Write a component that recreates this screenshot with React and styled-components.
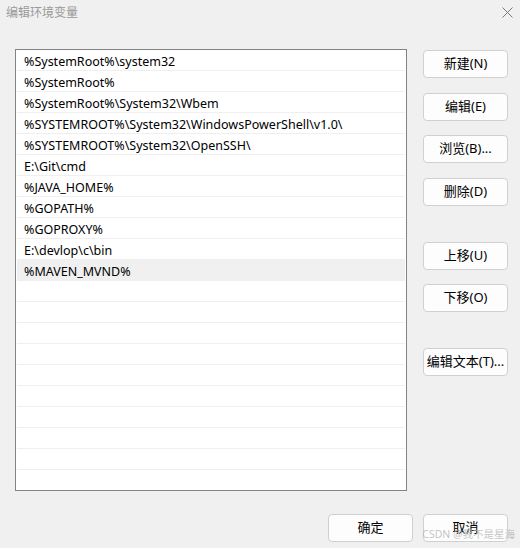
import React from 'react'
import styled, { createGlobalStyle } from 'styled-components'

const GlobalStyle = createGlobalStyle`
  html, body {
    margin: 0;
    padding: 0;
    background: #f0f0f0;
  }
  body {
    font-family: 'Segoe UI', 'Noto Sans', 'Noto Sans CJK SC', sans-serif;
  }
`

const paths = [
  '%SystemRoot%\\system32',
  '%SystemRoot%',
  '%SystemRoot%\\System32\\Wbem',
  '%SYSTEMROOT%\\System32\\WindowsPowerShell\\v1.0\\',
  '%SYSTEMROOT%\\System32\\OpenSSH\\',
  'E:\\Git\\cmd',
  '%JAVA_HOME%',
  '%GOPATH%',
  '%GOPROXY%',
  'E:\\devlop\\c\\bin',
  '%MAVEN_MVND%',
]

const ROWS = 21

const sideButtons = [
  { label: '新建(N)', space: 1 },
  { label: '编辑(E)', space: 15 },
  { label: '浏览(B)...', space: 14 },
  { label: '删除(D)', space: 15 },
  { label: '上移(U)', space: 36 },
  { label: '下移(O)', space: 14 },
  { label: '编辑文本(T)...', space: 36 },
]

export default function App() {
  const rows = Array.from({ length: ROWS }, (_, i) => paths[i] || '')
  return (
    <Window>
      <GlobalStyle />
      <TitleBar>
        <Title>编辑环境变量</Title>
        <CloseButton>
          <svg width="11" height="11" viewBox="0 0 11 11">
            <path d="M0.5 0.5 L10.5 10.5 M10.5 0.5 L0.5 10.5" stroke="#7a7a7a" strokeWidth="1" fill="none" />
          </svg>
        </CloseButton>
      </TitleBar>
      <Body>
        <ListBox>
          {rows.map((text, i) => (
            <Row key={i} $selected={i === 10} $last={i === ROWS - 1}>
              {text}
            </Row>
          ))}
        </ListBox>
        <Side>
          {sideButtons.map(b => (
            <Button key={b.label} $space={b.space}>{b.label}</Button>
          ))}
        </Side>
      </Body>
      <Footer>
        <Button>确定</Button>
        <Button>取消</Button>
        <Watermark>CSDN @我不是星海</Watermark>
      </Footer>
    </Window>
  )
}

const Window = styled.div`
  position: relative;
  width: 520px;
  height: 548px;
  background: #f0f0f0;
  overflow: hidden;
`

const TitleBar = styled.div`
  display: flex;
  align-items: center;
  justify-content: space-between;
  height: 24px;
  padding: 0 7px 0 6px;
`

const Title = styled.div`
  font-family: 'Noto Sans CJK SC', sans-serif;
  font-size: 12px;
  color: #999999;
  line-height: 1;
`

const CloseButton = styled.div`
  display: flex;
  align-items: center;
  justify-content: center;
  width: 11px;
  height: 11px;
`

const Body = styled.div`
  display: flex;
  align-items: flex-start;
  margin-top: 25px;
  padding-left: 15px;
`

const ListBox = styled.div`
  box-sizing: border-box;
  width: 392px;
  height: 442px;
  border: 1px solid #838383;
  background: #ffffff;
  padding: 0 1px;
  overflow: hidden;
`

const Row = styled.div`
  box-sizing: border-box;
  height: 21px;
  line-height: 23px;
  padding-left: 7px;
  font-size: 12.5px;
  color: #000000;
  white-space: nowrap;
  background: ${p => (p.$selected ? '#f0f0f0' : '#ffffff')};
  border-bottom: ${p => (p.$last ? 'none' : '1px solid #efefef')};
`

const Side = styled.div`
  display: flex;
  flex-direction: column;
  margin-left: 16px;
`

const Button = styled.button`
  box-sizing: border-box;
  width: 85px;
  height: 28px;
  margin-top: ${p => p.$space || 0}px;
  padding: 0 0 3px;
  border: 1px solid #d0d0d0;
  border-radius: 4px;
  background: #fdfdfd;
  color: #000000;
  font-family: 'Segoe UI', 'Noto Sans', 'Noto Sans CJK SC', sans-serif;
  font-size: 13px;
  white-space: nowrap;
`

const Footer = styled.div`
  display: flex;
  gap: 10px;
  justify-content: flex-end;
  margin-top: 23px;
  padding-right: 12px;
`

const Watermark = styled.div`
  position: absolute;
  right: 5px;
  bottom: 7px;
  font-family: 'Noto Sans', 'Noto Sans CJK SC', sans-serif;
  font-size: 10.5px;
  color: rgba(185, 185, 185, 0.85);
  pointer-events: none;
`
